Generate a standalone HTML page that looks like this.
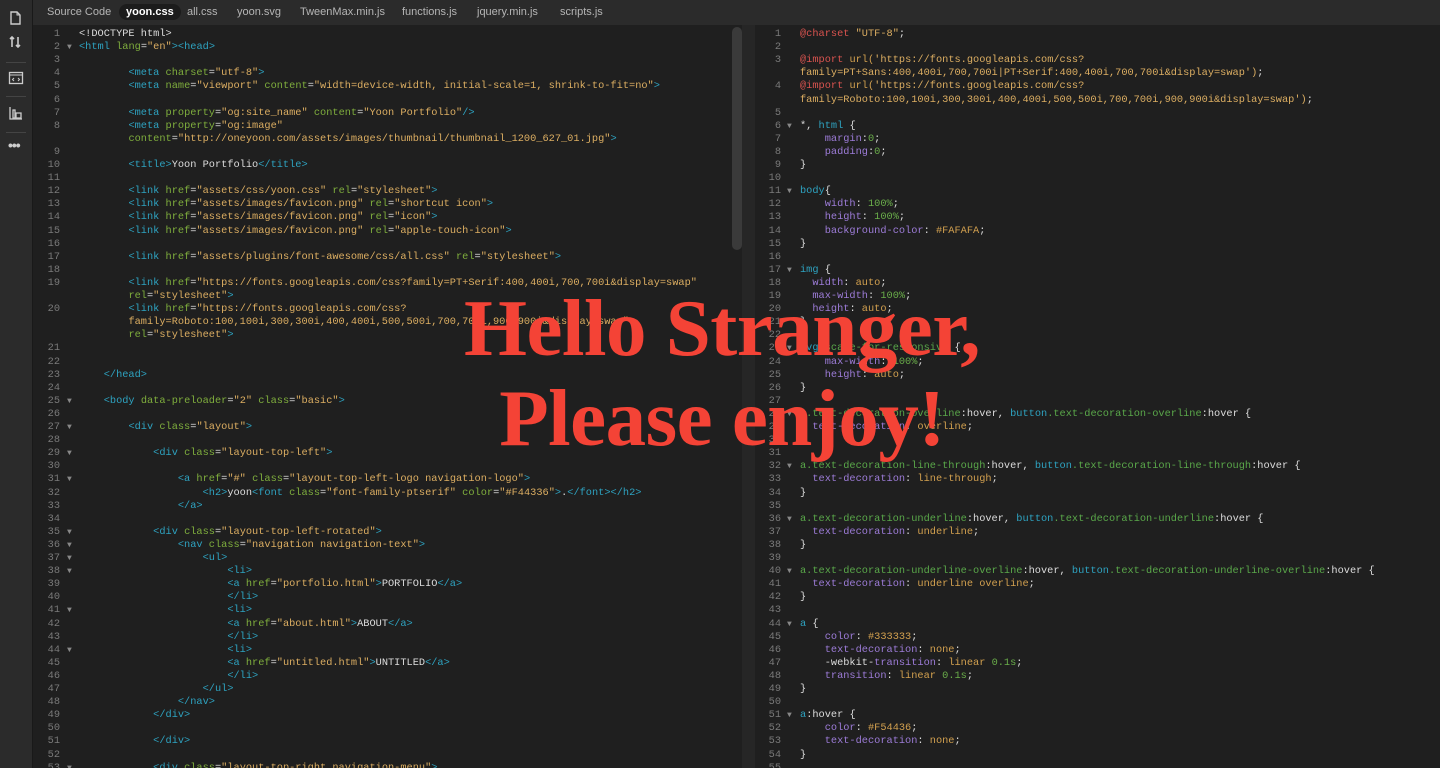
<!DOCTYPE html>
<html><head><meta charset="utf-8"><style>
*{margin:0;padding:0;box-sizing:border-box}
body{width:1440px;height:768px;overflow:hidden;background:#1f1f1f;font-family:"Liberation Mono",monospace;position:relative}
#side{position:absolute;left:0;top:0;width:33px;height:768px;background:#2b2b2b;border-right:1px solid #191919}
#tabs{position:absolute;left:33px;top:0;right:0;height:25px;background:#2b2b2b;font-family:"Liberation Sans",sans-serif;font-size:11px;color:#b5b5b5}
#tabs span{position:absolute;top:6px}
#tabs .act{background:#1c1c1c;color:#fff;font-weight:bold;border-radius:9px;padding:2px 7px;top:4px}
.pane{position:absolute;top:25px;height:743px;overflow:hidden}
.ln{position:absolute;left:0;width:100%;height:13.1px;font-size:10.3px;line-height:13.1px;white-space:pre;color:#ddd}
.n{position:absolute;width:26px;text-align:right;color:#7a7a7a}
.f{position:absolute;color:#888;font-size:8px}
.c{position:absolute}
.t{color:#2ea3c1}.a{color:#7fae3d}.s{color:#dcae62}.r{color:#d9534f}.p{color:#9d7cd8}.g{color:#6aae4a}.k{color:#d2a04f}.e{color:#5aa84a}
#sb{position:absolute;left:732px;top:27px;width:10px;height:223px;background:#3a3a3a;border-radius:5px}
#div{position:absolute;left:742px;top:25px;width:13px;height:743px;background:#262626}
#hello{position:absolute;left:2px;width:1440px;text-align:center;font-family:"Liberation Serif",serif;font-weight:bold;color:#F44336;font-size:81px;line-height:90px;top:283px;letter-spacing:-0.5px}
.ic{position:absolute;left:8px;width:16px;height:16px}
</style></head><body>
<div id="side">
<svg class="ic" style="top:10px" viewBox="0 0 16 16"><path d="M3 2h6l3 3v9H3z" fill="none" stroke="#ccc" stroke-width="1.4"/><path d="M9 2v3h3" fill="none" stroke="#ccc"/></svg>
<svg class="ic" style="top:34px" viewBox="0 0 16 16"><path d="M4 13V3M2 5l2-2 2 2M10 3v10M8 11l2 2 2-2" fill="none" stroke="#ccc" stroke-width="1.6"/></svg>
<div style="position:absolute;left:6px;top:62px;width:20px;height:1px;background:#444"></div>
<svg class="ic" style="top:70px" viewBox="0 0 16 16"><rect x="1.5" y="2.5" width="13" height="11" fill="none" stroke="#ccc" stroke-width="1.3"/><path d="M2 5h12" stroke="#ccc"/><path d="M6 8l-1.5 1.5L6 11M10 8l1.5 1.5L10 11" fill="none" stroke="#ccc"/></svg>
<div style="position:absolute;left:6px;top:96px;width:20px;height:1px;background:#444"></div>
<svg class="ic" style="top:105px" viewBox="0 0 16 16"><path d="M2 2v12h12M5 5h2v8H5zM8 8h5v5H8z" fill="none" stroke="#ccc" stroke-width="1.3"/></svg>
<div style="position:absolute;left:6px;top:132px;width:20px;height:1px;background:#444"></div>
<div style="position:absolute;left:8px;top:137px;color:#ccc;font-size:14px;font-family:'Liberation Sans';letter-spacing:-1px;font-weight:bold">•••</div>
</div>
<div id="tabs">
<span style="left:14px">Source Code</span><span class="act" style="left:86px">yoon.css</span><span style="left:154px">all.css</span><span style="left:204px">yoon.svg</span><span style="left:267px">TweenMax.min.js</span><span style="left:369px">functions.js</span><span style="left:444px">jquery.min.js</span><span style="left:527px">scripts.js</span>
</div>
<div class="pane" style="left:34px;width:698px" id="L"></div>
<div id="sb"></div><div id="div"></div>
<div class="pane" style="left:755px;width:685px" id="R"></div>
<div id="hello">Hello Stranger,<br>Please enjoy!</div>
<script>
function T(x){return '<span class="t">'+x+'</span>'}
function A(x){return '<span class="a">'+x+'</span>'}
function S(x){return '<span class="s">'+x+'</span>'}
function at(n,v){return ' '+A(n)+'='+S('"'+v+'"')}
function tag(name,attrs,close){return T('&lt;'+name)+(attrs||'')+T(close?'/&gt;':'&gt;')}
function ct(n){return T('&lt;/'+n+'&gt;')}
function sp(n){return ' '.repeat(n)}
var L=[
[1,0,'&lt;!DOCTYPE html&gt;'],
[2,1,tag('html',at('lang','en'))+tag('head')],
[3,0,''],
[4,0,sp(8)+tag('meta',at('charset','utf-8'))],
[5,0,sp(8)+tag('meta',at('name','viewport')+at('content','width=device-width, initial-scale=1, shrink-to-fit=no'))],
[6,0,''],
[7,0,sp(8)+tag('meta',at('property','og:site_name')+at('content','Yoon Portfolio'),1)],
[8,0,sp(8)+T('&lt;meta')+at('property','og:image')],
['',0,sp(8)+A('content')+'='+S('"http://oneyoon.com/assets/images/thumbnail/thumbnail_1200_627_01.jpg"')+T('&gt;')],
[9,0,''],
[10,0,sp(8)+T('&lt;title&gt;')+'Yoon Portfolio'+ct('title')],
[11,0,''],
[12,0,sp(8)+tag('link',at('href','assets/css/yoon.css')+at('rel','stylesheet'))],
[13,0,sp(8)+tag('link',at('href','assets/images/favicon.png')+at('rel','shortcut icon'))],
[14,0,sp(8)+tag('link',at('href','assets/images/favicon.png')+at('rel','icon'))],
[15,0,sp(8)+tag('link',at('href','assets/images/favicon.png')+at('rel','apple-touch-icon'))],
[16,0,''],
[17,0,sp(8)+tag('link',at('href','assets/plugins/font-awesome/css/all.css')+at('rel','stylesheet'))],
[18,0,''],
[19,0,sp(8)+T('&lt;link')+at('href','https://fonts.googleapis.com/css?family=PT+Serif:400,400i,700,700i&amp;display=swap')],
['',0,sp(8)+A('rel')+'='+S('"stylesheet"')+T('&gt;')],
[20,0,sp(8)+T('&lt;link')+' '+A('href')+'='+S('"https://fonts.googleapis.com/css?')],
['',0,sp(8)+S('family=Roboto:100,100i,300,300i,400,400i,500,500i,700,700i,900,900i&amp;display=swap"')],
['',0,sp(8)+A('rel')+'='+S('"stylesheet"')+T('&gt;')],
[21,0,''],[22,0,''],
[23,0,sp(4)+ct('head')],
[24,0,''],
[25,1,sp(4)+tag('body',at('data-preloader','2')+at('class','basic'))],
[26,0,''],
[27,1,sp(8)+tag('div',at('class','layout'))],
[28,0,''],
[29,1,sp(12)+tag('div',at('class','layout-top-left'))],
[30,0,''],
[31,1,sp(16)+tag('a',at('href','#')+at('class','layout-top-left-logo navigation-logo'))],
[32,0,sp(20)+T('&lt;h2&gt;')+'yoon'+tag('font',at('class','font-family-ptserif')+at('color','#F44336'))+'.'+ct('font')+ct('h2')],
[33,0,sp(16)+ct('a')],
[34,0,''],
[35,1,sp(12)+tag('div',at('class','layout-top-left-rotated'))],
[36,1,sp(16)+tag('nav',at('class','navigation navigation-text'))],
[37,1,sp(20)+T('&lt;ul&gt;')],
[38,1,sp(24)+T('&lt;li&gt;')],
[39,0,sp(24)+tag('a',at('href','portfolio.html'))+'PORTFOLIO'+ct('a')],
[40,0,sp(24)+ct('li')],
[41,1,sp(24)+T('&lt;li&gt;')],
[42,0,sp(24)+tag('a',at('href','about.html'))+'ABOUT'+ct('a')],
[43,0,sp(24)+ct('li')],
[44,1,sp(24)+T('&lt;li&gt;')],
[45,0,sp(24)+tag('a',at('href','untitled.html'))+'UNTITLED'+ct('a')],
[46,0,sp(24)+ct('li')],
[47,0,sp(20)+ct('ul')],
[48,0,sp(16)+ct('nav')],
[49,0,sp(12)+ct('div')],
[50,0,''],
[51,0,sp(12)+ct('div')],
[52,0,''],
[53,1,sp(12)+tag('div',at('class','layout-top-right navigation-menu'))]
];
function Rr(x){return '<span class="r">'+x+'</span>'}
function P(x){return '<span class="p">'+x+'</span>'}
function K(x){return '<span class="k">'+x+'</span>'}
function G(x){return '<span class="g">'+x+'</span>'}
function E(x){return '<span class="e">'+x+'</span>'}
function pr(ind,n,v){return sp(ind)+P(n)+': '+v+';'}
var R=[
[1,0,Rr('@charset')+' '+S('"UTF-8"')+';'],
[2,0,''],
[3,0,Rr('@import')+' '+K("url(")+S("'https://fonts.googleapis.com/css?")],
['',0,S("family=PT+Sans:400,400i,700,700i|PT+Serif:400,400i,700,700i&amp;display=swap')")+';'],
[4,0,Rr('@import')+' '+K("url(")+S("'https://fonts.googleapis.com/css?")],
['',0,S("family=Roboto:100,100i,300,300i,400,400i,500,500i,700,700i,900,900i&amp;display=swap')")+';'],
[5,0,''],
[6,1,'*, '+T('html')+' {'],
[7,0,sp(4)+P('margin')+':'+G('0')+';'],
[8,0,sp(4)+P('padding')+':'+G('0')+';'],
[9,0,'}'],[10,0,''],
[11,1,T('body')+'{'],
[12,0,pr(4,'width',G('100%'))],
[13,0,pr(4,'height',G('100%'))],
[14,0,pr(4,'background-color',K('#FAFAFA'))],
[15,0,'}'],[16,0,''],
[17,1,T('img')+' {'],
[18,0,pr(2,'width',K('auto'))],
[19,0,pr(2,'max-width',G('100%'))],
[20,0,pr(2,'height',K('auto'))],
[21,0,'}'],[22,0,''],
[23,1,T('svg')+'.'+E('scale-for-responsive')+' {'],
[24,0,pr(4,'max-width',G('100%'))],
[25,0,pr(4,'height',K('auto'))],
[26,0,'}'],[27,0,''],
[28,1,E('a.text-decoration-overline')+':hover, '+T('button')+E('.text-decoration-overline')+':hover {'],
[29,0,pr(2,'text-decoration',K('overline'))],
[30,0,'}'],[31,0,''],
[32,1,E('a.text-decoration-line-through')+':hover, '+T('button')+E('.text-decoration-line-through')+':hover {'],
[33,0,pr(2,'text-decoration',K('line-through'))],
[34,0,'}'],[35,0,''],
[36,1,E('a.text-decoration-underline')+':hover, '+T('button')+E('.text-decoration-underline')+':hover {'],
[37,0,pr(2,'text-decoration',K('underline'))],
[38,0,'}'],[39,0,''],
[40,1,E('a.text-decoration-underline-overline')+':hover, '+T('button')+E('.text-decoration-underline-overline')+':hover {'],
[41,0,pr(2,'text-decoration',K('underline overline'))],
[42,0,'}'],[43,0,''],
[44,1,T('a')+' {'],
[45,0,pr(4,'color',K('#333333'))],
[46,0,pr(4,'text-decoration',K('none'))],
[47,0,sp(4)+'-webkit-'+P('transition')+': '+K('linear')+' '+G('0.1s')+';'],
[48,0,pr(4,'transition',K('linear')+' '+G('0.1s'))],
[49,0,'}'],[50,0,''],
[51,1,T('a')+':hover {'],
[52,0,pr(4,'color',K('#F54436'))],
[53,0,pr(4,'text-decoration',K('none'))],
[54,0,'}'],[55,0,'']
];
function render(id,arr,nx,fx,cx){var h='';arr.forEach(function(l,i){h+='<div class="ln" style="top:'+(3+i*13.1)+'px"><span class="n" style="left:'+nx+'px">'+l[0]+'</span>'+(l[1]?'<span class="f" style="left:'+fx+'px">▼</span>':'')+'<span class="c" style="left:'+cx+'px">'+l[2]+'</span></div>'});document.getElementById(id).innerHTML=h}
render('L',L,0,33,45);
render('R',R,0,32,45);
</script>
</body></html>
